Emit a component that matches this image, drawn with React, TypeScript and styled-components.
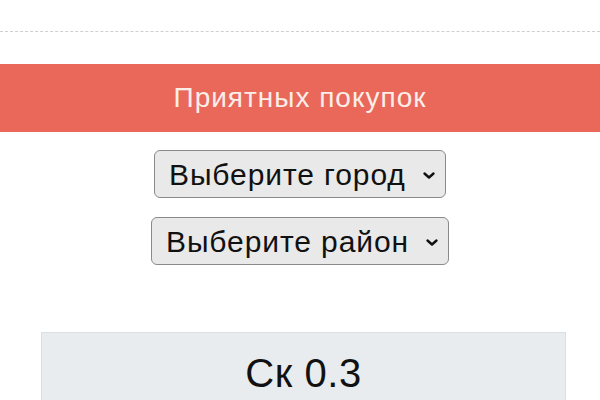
import styled, { createGlobalStyle } from "styled-components";

const GlobalStyle = createGlobalStyle`
  html, body {
    margin: 0;
    padding: 0;
    background: #fff;
    font-family: "Liberation Sans", Arial, sans-serif;
  }
`;

const Page = styled.div`
  display: flex;
  flex-direction: column;
  padding-top: 31px;
`;

const Divider = styled.hr`
  margin: 0;
  border: 0;
  border-top: 1px dashed #cfcfcf;
`;

const Banner = styled.div`
  margin-top: 32px;
  height: 68px;
  background: #e9685a;
  color: #fbeee9;
  display: flex;
  align-items: center;
  justify-content: center;
  font-size: 28px;
  letter-spacing: 1px;
`;

const Filters = styled.div`
  display: flex;
  flex-direction: column;
  align-items: center;
  gap: 19px;
  padding-top: 18px;
`;

const SelectWrap = styled.div`
  position: relative;
  display: inline-flex;
`;

const Select = styled.select`
  appearance: none;
  -webkit-appearance: none;
  height: 48px;
  padding: 0 39px 0 14px;
  font-family: "Liberation Sans", Arial, sans-serif;
  font-size: 30px;
  letter-spacing: 0.9px;
  color: #111;
  background: #e9e9e9;
  border: 1.5px solid #8a8a8a;
  border-radius: 6px;
  outline: none;
`;

const Chevron = styled.svg`
  position: absolute;
  right: 10px;
  top: 50%;
  margin-top: -3px;
  width: 14px;
  height: 9px;
  pointer-events: none;
`;

const PriceBox = styled.div`
  margin: 67px 0 0 41px;
  width: 525px;
  height: 80px;
  box-sizing: border-box;
  background: #e9ecef;
  border: 1px solid #dcdfe2;
  border-bottom: 0;
  display: flex;
  justify-content: center;
  padding-top: 18px;
  font-size: 40px;
  letter-spacing: 0.6px;
  color: #111;
`;

const Dropdown = ({ label }: { label: string }) => (
  <SelectWrap>
    <Select defaultValue="">
      <option value="">{label}</option>
    </Select>
    <Chevron viewBox="0 0 14 9">
      <path d="M2.5 2.5 L7 6.5 L11.5 2.5" fill="none" stroke="#111" strokeWidth="2.4" strokeLinecap="round" strokeLinejoin="round" />
    </Chevron>
  </SelectWrap>
);

export default function App() {
  return (
    <>
      <GlobalStyle />
      <Page>
        <Divider />
        <Banner>Приятных покупок</Banner>
        <Filters>
          <Dropdown label="Выберите город" />
          <Dropdown label="Выберите район" />
        </Filters>
        <PriceBox>Ск 0.3</PriceBox>
      </Page>
    </>
  );
}
